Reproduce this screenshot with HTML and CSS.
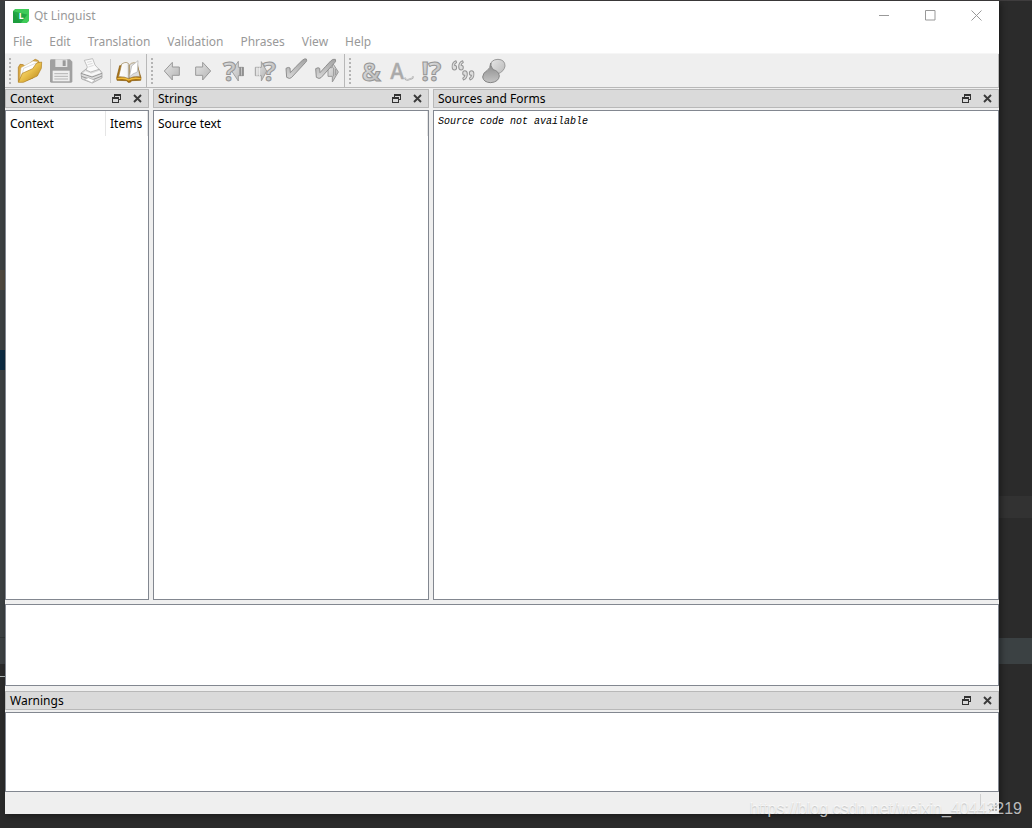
FILE: index.html
```html
<!DOCTYPE html>
<html lang="en">
<head>
    <meta charset="UTF-8">
    <meta name="viewport" content="width=device-width, initial-scale=1.0">
    <title>Qt Linguist</title>
    <link rel="stylesheet" href="styles.css">
</head>
<body>
    <!-- Shared gradients and symbols -->
    <svg class="defs" width="0" height="0" aria-hidden="true">
        <defs>
            <linearGradient id="gold" x1="0" y1="0" x2="1" y2="1">
                <stop offset="0" stop-color="#fff0a8"/>
                <stop offset="0.5" stop-color="#e9c04c"/>
                <stop offset="1" stop-color="#b07c14"/>
            </linearGradient>
            <linearGradient id="gray" x1="0" y1="0" x2="1" y2="1">
                <stop offset="0" stop-color="#e6e6e6"/>
                <stop offset="1" stop-color="#b4b4b4"/>
            </linearGradient>
            <linearGradient id="dark" x1="0" y1="0" x2="0" y2="1">
                <stop offset="0" stop-color="#a2a2a2"/>
                <stop offset="1" stop-color="#d8d8d8"/>
            </linearGradient>
            <linearGradient id="drop" x1="0" y1="0" x2="0" y2="1">
                <stop offset="0" stop-color="#888888"/>
                <stop offset="1" stop-color="#c4c4c4"/>
            </linearGradient>
            <linearGradient id="paper" x1="0" y1="0" x2="1" y2="0">
                <stop offset="0" stop-color="#ffffff"/>
                <stop offset="0.8" stop-color="#f4f4f4"/>
                <stop offset="1" stop-color="#c8c8c8"/>
            </linearGradient>
            <symbol id="float" viewBox="0 0 9 9">
                <path d="M2 0h7v6H7V5h1V2H3v1H2z" fill="#333"/>
                <path d="M0 3h7v6H0zM1 5v3h5V5z" fill="#333" fill-rule="evenodd"/>
            </symbol>
            <symbol id="close" viewBox="0 0 9 9">
                <path d="M1 1l7 7M8 1l-7 7" fill="none" stroke="#3a3a3a" stroke-width="1.900"/>
            </symbol>
            <symbol id="quote" viewBox="0 0 18 32">
                <path d="M13 3Q2 7 2 20q0 9 7 9 6 0 6-7 0-6-6-6 0-5 6-8z" fill="#ddd" stroke="#979797" stroke-width="3" stroke-linejoin="round"/>
            </symbol>
        </defs>
    </svg>

    <div class="window">
        <header class="title-bar">
            <svg class="logo" viewBox="0 0 48 42">
                <path d="M7 0h41v35l-7 7H0V7z" fill="#22a845"/>
                <path d="M7 0h41v18L0 7z" fill="#3fcb58"/>
                <path d="M48 10v25l-7 7H24z" fill="#3fcb58"/>
                <path d="M0 7l24 35H0z" fill="#1c9d3d"/>
                <text x="17" y="31" font-size="26">L</text>
            </svg>
            <h1>Qt Linguist</h1>
            <div class="window-buttons">
                <button type="button" aria-label="Minimize">
                    <svg viewBox="0 0 11 11"><path d="M0 5.500h10"/></svg>
                </button>
                <button type="button" aria-label="Maximize">
                    <svg viewBox="0 0 11 11"><path d="M.5.500h9.500v9.500H.5z"/></svg>
                </button>
                <button type="button" aria-label="Close">
                    <svg viewBox="0 0 11 11"><path d="M.5.500l10 10M10.500.500l-10 10"/></svg>
                </button>
            </div>
        </header>

        <nav class="menu-bar">
            <button type="button">File</button>
            <button type="button">Edit</button>
            <button type="button">Translation</button>
            <button type="button">Validation</button>
            <button type="button">Phrases</button>
            <button type="button">View</button>
            <button type="button">Help</button>
        </nav>

        <div class="toolbars">
            <div class="toolbar">
                <span class="handle"></span>
                <button type="button" aria-label="Open">
                    <svg viewBox="0 0 93 93">
                        <path d="M10 80V37l5-9 10 1 5 5 12-7 15-12 4-2 9 4 4 8-20 44-28 10z" fill="#dcaa42" stroke="#a9761a" stroke-width="2"/>
                        <path d="M15 73l3-35 36-20 14 2-6 29z" fill="#fff" stroke="#c9b98a" stroke-width="1.500"/>
                        <path d="M18 70l8-30 38-16" fill="none" stroke="#ccc" stroke-width="2"/>
                        <path d="M10 82l12-27 31-14 12-17 15-3-1 19-12 23-42 19z" fill="url(#gold)" stroke="#b17e1d" stroke-width="2"/>
                    </svg>
                </button>
                <button type="button" aria-label="Save" disabled>
                    <svg viewBox="0 0 93 93">
                        <path d="M12 17q0-4 4-4h56l7 7v59q0 4-4 4H16q-4 0-4-4z" fill="#a0a0a0"/>
                        <path d="M28 13h36v23H28z" fill="#e4e4e4"/>
                        <path d="M50 16h9v17h-9z" fill="#999"/>
                        <path d="M20 47h51v32H20z" fill="#eee"/>
                        <path d="M25 56h41M25 64h41M25 72h41" stroke="#b4b4b4" stroke-width="3"/>
                    </svg>
                </button>
                <button type="button" aria-label="Print" disabled>
                    <svg viewBox="0 0 93 93">
                        <path d="M12 54l19-15 36 4 8 10v16L46 84 14 72z" fill="#ddd" stroke="#999" stroke-width="2"/>
                        <path d="M22 16l25-5 7 19 12 13-25 8-14-6 4-9z" fill="#fafafa" stroke="#a4a4a4" stroke-width="2"/>
                        <path d="M30 22l14-3M32 29l15-4M34 36l16-5" stroke="#ccc" stroke-width="2"/>
                        <path d="M12 55l33 11 30-11M13 64l32 11 30-12" fill="none" stroke="#999" stroke-width="3"/>
                        <path d="M18 55l8-6 17 7 24-9 5 6-27 10z" fill="#f8f8f8"/>
                        <path d="M22 73l12-5 20 8-10 7z" fill="#fff" stroke="#aaa" stroke-width="2"/>
                    </svg>
                </button>
                <span class="separator"></span>
                <button type="button" aria-label="Open phrase book">
                    <svg viewBox="0 0 93 93">
                        <path d="M8 68l9-36h53l11 36-1 8-27 1-4 5H42l-4-5-29-1z" fill="#a9700f" stroke="#85580a" stroke-width="2"/>
                        <path d="M14 65l9-38q16-10 22 1v43q-14-7-31-6z" fill="url(#paper)" stroke="#9c8252" stroke-width="2"/>
                        <path d="M46 70V30q6-7 14-7l10 3 8 39q-22-2-32 5z" fill="#ddd" stroke="#9c8252" stroke-width="2"/>
                        <path d="M46 66l7-33 19-16-2 34q-14 4-24 15z" fill="#fff" stroke="#aaa" stroke-width="2"/>
                        <path d="M10 71q24-4 34 4 12-8 36-4" fill="none" stroke="#f0bd3e" stroke-width="4"/>
                    </svg>
                </button>
            </div>

            <div class="toolbar">
                <span class="handle"></span>
                <button type="button" aria-label="Previous" disabled>
                    <svg viewBox="0 0 93 93">
                        <path d="M22 48l24-26v14h21v25H46v14z" fill="url(#gray)" stroke="#999" stroke-width="3" stroke-linejoin="round"/>
                    </svg>
                </button>
                <button type="button" aria-label="Next" disabled>
                    <svg viewBox="0 0 93 93">
                        <path d="M68 48L44 22v14H23v25h21v14z" fill="url(#gray)" stroke="#999" stroke-width="3" stroke-linejoin="round"/>
                    </svg>
                </button>
                <button type="button" aria-label="Previous unfinished" disabled>
                    <svg viewBox="0 0 93 93">
                        <path d="M38 48l20-29v18h15v25H58v16z" fill="url(#gray)" stroke="#a0a0a0" stroke-width="3"/>
                        <path d="M61 36h5v27h-5zM69 36h5v27h-5z" fill="#909090"/>
                        <text class="mark" x="12" y="79" font-size="82">?</text>
                    </svg>
                </button>
                <button type="button" aria-label="Next unfinished" disabled>
                    <svg viewBox="0 0 93 93">
                        <path d="M50 48L34 20v17H16v25h18v16z" fill="url(#gray)" stroke="#a0a0a0" stroke-width="3"/>
                        <path d="M21 37v26M28 37v26" stroke="#eee" stroke-width="3"/>
                        <text class="mark" x="39" y="79" font-size="82">?</text>
                    </svg>
                </button>
                <button type="button" aria-label="Done" disabled>
                    <svg viewBox="0 0 93 93">
                        <path d="M15 40q8-5 12-1l1 14q17-19 36-37 6-6 12-4 3 6-2 10L31 68q-5 5-14-1z" fill="url(#dark)" stroke="#8f8f8f" stroke-width="3" stroke-linejoin="round"/>
                    </svg>
                </button>
                <button type="button" aria-label="Done and next" disabled>
                    <svg viewBox="0 0 93 93">
                        <path d="M79 51L61 23v15H48v26h13v17z" fill="url(#gray)" stroke="#999" stroke-width="3"/>
                        <path d="M65 38v26M71 42v18" stroke="#999" stroke-width="3"/>
                        <path d="M11 41q8-5 12-1l1 13q16-18 32-35 6-7 14-5 3 6-2 10L27 68q-5 5-14-1z" fill="url(#dark)" stroke="#8f8f8f" stroke-width="3" stroke-linejoin="round"/>
                    </svg>
                </button>
            </div>

            <div class="toolbar">
                <span class="handle"></span>
                <button type="button" aria-label="Accelerators" disabled>
                    <svg viewBox="0 0 93 93"><text class="mark" x="20" y="79" font-size="76">&amp;</text></svg>
                </button>
                <button type="button" aria-label="Surrounding whitespace" disabled>
                    <svg viewBox="0 0 93 93">
                        <text class="mark thin" x="13" y="72" font-size="62">A</text>
                        <path d="M57 68q1 8 10 6l9-3q6-1 4-7" fill="none" stroke="#aaa" stroke-width="5"/>
                        <path d="M57 68q1 8 10 6l9-3q6-1 4-7" fill="none" stroke="#ddd" stroke-width="2"/>
                    </svg>
                </button>
                <button type="button" aria-label="Ending punctuation" disabled>
                    <svg viewBox="0 0 93 93">
                        <text class="mark" x="13" y="77" font-size="82">!</text>
                        <text class="mark" x="34" y="77" font-size="82">?</text>
                    </svg>
                </button>
                <button type="button" aria-label="Phrase matches" disabled>
                    <svg viewBox="0 0 93 93">
                        <use href="#quote" x="10" y="14" width="19" height="34"/>
                        <use href="#quote" x="30" y="14" width="19" height="34"/>
                        <g transform="rotate(180 56 61)">
                            <use href="#quote" x="32" y="44" width="19" height="34"/>
                            <use href="#quote" x="52" y="44" width="19" height="34"/>
                        </g>
                    </svg>
                </button>
                <button type="button" aria-label="Place markers" disabled>
                    <svg viewBox="0 0 93 93">
                        <path d="M35 31q0-17 22-18 21 1 21 20-2 16-22 24l-8 15 0-20z" fill="url(#gray)" stroke="#999" stroke-width="3"/>
                        <path d="M35 24q0 16 8 20 16 4 18 19-2 18-26 20-22-1-24-17 1-13 13-19 11-7 11-23z" fill="url(#drop)" stroke="#858585" stroke-width="3"/>
                    </svg>
                </button>
            </div>
        </div>

        <main class="docks">
            <section class="dock">
                <div class="dock-title">
                    <h2>Context</h2>
                    <button type="button" aria-label="Float"><svg><use href="#float"/></svg></button>
                    <button type="button" aria-label="Close"><svg><use href="#close"/></svg></button>
                </div>
                <div class="dock-body">
                    <table>
                        <tr><th>Context</th><th class="items">Items</th></tr>
                    </table>
                </div>
            </section>
            <section class="dock">
                <div class="dock-title">
                    <h2>Strings</h2>
                    <button type="button" aria-label="Float"><svg><use href="#float"/></svg></button>
                    <button type="button" aria-label="Close"><svg><use href="#close"/></svg></button>
                </div>
                <div class="dock-body">
                    <table>
                        <tr><th>Source text</th></tr>
                    </table>
                </div>
            </section>
            <section class="dock">
                <div class="dock-title">
                    <h2>Sources and Forms</h2>
                    <button type="button" aria-label="Float"><svg><use href="#float"/></svg></button>
                    <button type="button" aria-label="Close"><svg><use href="#close"/></svg></button>
                </div>
                <div class="dock-body">
                    <p class="source">Source code not available</p>
                </div>
            </section>
        </main>

        <div class="editor"></div>

        <section class="dock warnings">
            <div class="dock-title">
                <h2>Warnings</h2>
                <button type="button" aria-label="Float"><svg><use href="#float"/></svg></button>
                <button type="button" aria-label="Close"><svg><use href="#close"/></svg></button>
            </div>
            <div class="dock-body"></div>
        </section>

        <footer class="status-bar">
            <span class="status-line"></span>
            <svg class="grip" viewBox="0 0 8 8">
                <path d="M6 0h2v2H6zM3 3h2v2H3zM6 3h2v2H6zM0 6h2v2H0zM3 6h2v2H3zM6 6h2v2H6z" fill="#b4b4b4"/>
            </svg>
        </footer>
    </div>

    <p class="watermark">https://blog.csdn.net/weixin_40442219</p>
</body>
</html>
```
FILE: styles.css
```css
* {
    box-sizing: border-box;
}
body {
    margin: 0;
    height: 100vh;
    padding: 1px 33px 14px 5px;
    position: relative;
    overflow: hidden;
    font-family: "Noto Sans", "Open Sans", sans-serif;
    font-size: 12px;
    line-height: 18px;
    color: #000;
    background-color: #2b2b2b;
    /* editor behind the window: top edge, left strip, right strip */
    background-image:
        linear-gradient(#3f3d3e, #3f3d3e),
        linear-gradient(#3c4042 270px, #4f483e 270px, #4f483e 290px, #3c4042 290px, #3c4042 350px, #0d2b42 350px, #0d2b42 370px, #3c4042 370px, #3c4042 637px, #303435 637px, #303435 638px, #3c4042 638px, #3c4042 664px, #2b2b2b 664px, #2b2b2b 676px, #b0b8b6 676px, #b0b8b6 677px, #2b2b2b 677px),
        linear-gradient(#2b2b2b 496px, #323232 496px, #323232 518px, #2b2b2b 518px, #2b2b2b 638px, #3b4143 638px, #3b4143 664px, #2b2b2b 664px);
    background-size: 100% 1px, 5px 100%, 33px 100%;
    background-position: left top, left top, right top;
    background-repeat: no-repeat;
}
h1, h2, p {
    margin: 0;
    font-size: inherit;
    font-weight: normal;
}
button {
    padding: 0;
    border: none;
    background: none;
    font: inherit;
    color: inherit;
}
.defs {
    position: absolute;
}
.window {
    height: 100%;
    display: flex;
    flex-direction: column;
    background: #efefef;
    box-shadow: 2px 2px 6px rgba(0, 0, 0, 0.4);
}

/* Title bar and menu */
.title-bar {
    display: flex;
    align-items: center;
    height: 29px;
    padding-left: 8px;
    background: #fff;
    color: #999;
}
.logo {
    width: 16px;
    height: 14px;
    overflow: visible;
}
.logo text {
    fill: #fff;
    font-weight: bold;
}
.title-bar h1 {
    flex: 1;
    padding-left: 5px;
}
.window-buttons {
    display: flex;
    height: 100%;
}
.window-buttons button {
    width: 46px;
    display: flex;
    align-items: center;
    justify-content: center;
}
.window-buttons svg {
    width: 11px;
    height: 11px;
    fill: none;
    stroke: #999;
}
.menu-bar {
    display: flex;
    gap: 1px;
    height: 23px;
    background: #fff;
    color: #999;
}
.menu-bar button {
    padding: 0 8px;
}

/* Toolbars */
.toolbars {
    display: flex;
    height: 35px;
    border-top: 1px solid #f6f6f6;
    border-bottom: 1px solid #b8b8b8;
}
.toolbar {
    display: flex;
    align-items: center;
    padding-right: 1px;
    border-right: 1px solid #b8b8b8;
}
.toolbar:last-child {
    flex: 1;
}
.toolbar button {
    width: 31px;
    height: 31px;
}
.toolbar svg {
    display: block;
    width: 31px;
    height: 31px;
    overflow: visible;
}
.handle {
    width: 2px;
    height: 26px;
    margin: 0 4px;
    background: repeating-linear-gradient(#b4b4b4 0 2px, #efefef 2px 4px);
}
.separator {
    width: 1px;
    height: 24px;
    margin: 0 3px 0 2px;
    background: #ccc;
}
.mark {
    font-family: "Open Sans", sans-serif;
    font-weight: bold;
    fill: url(#gray);
    stroke: #959595;
    stroke-width: 3px;
}
.mark.thin {
    font-weight: 600;
    fill: #aaa;
    stroke: #b0b0b0;
    stroke-width: 1px;
}

/* Dock panels */
.docks {
    flex: 1;
    min-height: 0;
    display: grid;
    grid-template-columns: 144px 276px 1fr;
    gap: 4px;
    padding-top: 1px;
}
.dock {
    display: flex;
    flex-direction: column;
    gap: 2px;
}
.dock-title {
    display: flex;
    align-items: center;
    height: 19px;
    padding-left: 4px;
    border: 1px solid #b8b8b8;
    background: #dadada;
}
.dock-title h2 {
    flex: 1;
    padding-top: 1px;
}
.dock-title button {
    width: 21px;
    height: 17px;
    display: flex;
    align-items: center;
    justify-content: center;
}
.dock-title svg {
    width: 9px;
    height: 9px;
}
.dock-body {
    flex: 1;
    border: 1px solid #828790;
    background: #fff;
}
table {
    width: 100%;
    border-collapse: collapse;
}
th {
    height: 25px;
    padding: 0 4px;
    border-right: 1px solid #e5e5e5;
    font-weight: normal;
    text-align: left;
}
.items {
    width: 42px;
}
.source {
    padding: 4px;
    font: italic 10px/14px "Liberation Mono", monospace;
}
.editor {
    height: 82px;
    margin: 4px 0 5px;
    border: 1px solid #828790;
    background: #fff;
}
.warnings {
    height: 101px;
}

/* Status bar */
.status-bar {
    display: flex;
    justify-content: flex-end;
    align-items: flex-end;
    gap: 8px;
    height: 22px;
    padding: 2px 2px 3px 0;
}
.status-line {
    align-self: flex-start;
    width: 1px;
    height: 14px;
    background: #d0d0d0;
}
.grip {
    width: 8px;
    height: 8px;
}
.watermark {
    position: absolute;
    right: 10px;
    bottom: 10px;
    font: 16px/18px "Liberation Sans", Arial, sans-serif;
    color: rgba(255, 255, 255, 0.7);
    text-shadow: 0 1px 1px rgba(0, 0, 0, 0.2);
}
```
